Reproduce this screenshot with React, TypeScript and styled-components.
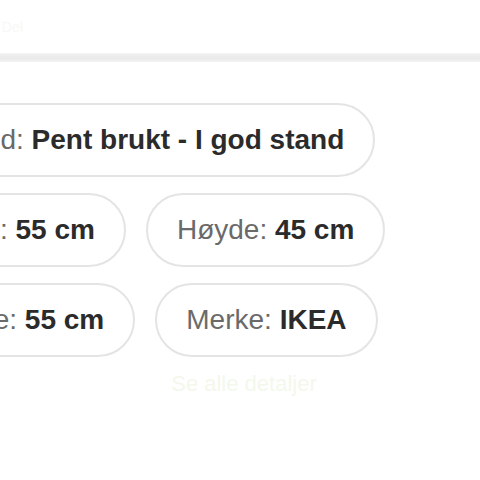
import React from 'react';
import styled, { createGlobalStyle } from 'styled-components';

const GlobalStyle = createGlobalStyle`
  html, body {
    margin: 0;
    padding: 0;
    background: #ffffff;
    overflow: hidden;
  }
  body {
    font-family: "Liberation Sans", Arial, sans-serif;
  }
`;

const Page = styled.div`
  width: 480px;
  height: 480px;
  overflow: hidden;
  background: #fff;
`;

const Header = styled.div`
  height: 53px;
  display: flex;
  align-items: center;
`;

const FaintLink = styled.span`
  font-size: 14px;
  color: #f8f8f4;
  margin-left: 2px;
`;

const Divider = styled.div`
  height: 9px;
  background: linear-gradient(#f3f3f3, #ebebeb 40%, #ebebeb 70%, #f4f4f4);
`;

const Body = styled.div`
  padding-top: 41px;
`;

const ChipList = styled.ul`
  list-style: none;
  margin: 0 0 0 -112px;
  padding: 0;
  width: 502px;
  display: flex;
  flex-wrap: wrap;
  gap: 16px 20px;
`;

const Chip = styled.li`
  border: 2px solid #e4e4e4;
  border-radius: 999px;
  padding: 17px 29px;
  font-size: 28px;
  line-height: 36px;
  white-space: nowrap;
  color: #6a6a6a;
`;

const Value = styled.b`
  font-weight: 700;
  color: #2b2b2b;
`;

const MoreRow = styled.div`
  display: flex;
  justify-content: center;
  padding-top: 14px;
`;

const MoreLink = styled.span`
  font-size: 22px;
  color: #f3f8ec;
  margin-left: 8px;
`;

const specs = [
  { label: 'Tilstand', value: 'Pent brukt - I god stand' },
  { label: 'Dybde', value: '55 cm' },
  { label: 'Høyde', value: '45 cm' },
  { label: 'Bredde', value: '55 cm' },
  { label: 'Merke', value: 'IKEA' },
];

export default function App() {
  return (
    <Page>
      <GlobalStyle />
      <Header>
        <FaintLink>Del</FaintLink>
      </Header>
      <Divider />
      <Body>
        <ChipList>
          {specs.map(s => (
            <Chip key={s.label}>
              {s.label}: <Value>{s.value}</Value>
            </Chip>
          ))}
        </ChipList>
        <MoreRow>
          <MoreLink>Se alle detaljer</MoreLink>
        </MoreRow>
      </Body>
    </Page>
  );
}
